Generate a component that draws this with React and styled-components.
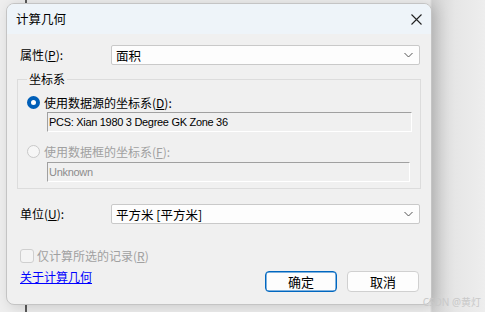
import React from "react";
import styled, { createGlobalStyle } from "styled-components";

const Global = createGlobalStyle`
  html, body { margin: 0; padding: 0; }
  body {
    width: 485px; height: 312px; overflow: hidden;
    background:
      linear-gradient(to right, transparent 25px, #5a5a5a 25px, #5a5a5a 27px, transparent 27px),
      linear-gradient(to right, #eeeeee 0, #eeeeee 430px, #d2d2d2 432px, #e6e6e6 455px, #eeeeee 485px);
    font-family: "Noto Sans CJK SC", "Noto Sans", sans-serif;
    font-size: 12px;
    color: #000;
  }
`;

const Page = styled.div`
  position: relative;
  width: 485px;
  height: 312px;
  padding: 3px 0 0 6px;
  box-sizing: border-box;
`;

const Dialog = styled.div`
  width: 426px;
  height: 302px;
  box-sizing: border-box;
  border: 1px solid #c4c4c4;
  border-radius: 8px;
  background: #f0f0f0;
  overflow: hidden;
  display: flex;
  flex-direction: column;
  box-shadow: 4px 2px 14px rgba(0, 0, 0, 0.16);
`;

const TitleBar = styled.div`
  height: 30px;
  flex: none;
  display: flex;
  align-items: center;
  justify-content: space-between;
  padding: 0 9px 0 9px;
  background: #eef4f9;
`;

const Title = styled.span`
  font-size: 12.5px;
  line-height: 1;
`;

const Close = styled.svg`
  width: 11px;
  height: 11px;
`;

const Body = styled.div`
  flex: 1;
  display: flex;
  flex-direction: column;
  padding: 11px 11px 0 13px;
`;

const FieldRow = styled.div`
  display: grid;
  grid-template-columns: 91px 1fr;
  align-items: center;
  height: 20px;
  margin-top: ${(p) => p.$top || 0}px;
`;

const Label = styled.span`
  line-height: 1;
`;

const Key = styled.span`
  text-decoration: underline;
  text-underline-offset: 1px;
`;

const Select = styled.div`
  height: 20px;
  box-sizing: border-box;
  border: 1px solid #c9c9c9;
  border-radius: 2px;
  background: #fdfdfd;
  display: flex;
  align-items: center;
  justify-content: space-between;
  padding: 0 6px 0 4px;
  font-size: 12.5px;
`;

const Chevron = styled.svg`
  width: 9px;
  height: 6px;
`;

const Group = styled.fieldset`
  margin: 7px 0 0 -3px;
  width: 404px;
  height: 117px;
  box-sizing: border-box;
  border: 1px solid #dcdcdc;
  padding: 0 0 0 9px;
  display: flex;
  flex-direction: column;
`;

const Legend = styled.legend`
  padding: 0 2px;
  margin-left: 0;
  font-size: 12px;
  line-height: 14px;
`;

const RadioRow = styled.div`
  display: flex;
  align-items: center;
  gap: 4px;
  height: 16px;
  margin-top: ${(p) => p.$top}px;
  color: ${(p) => (p.$disabled ? "#a0a0a0" : "#000")};
  font-size: 12px;
`;

const Radio = styled.span`
  width: 13px;
  height: 13px;
  box-sizing: border-box;
  border-radius: 50%;
  flex: none;
  ${(p) =>
    p.$checked
      ? `background: #fff; border: 4px solid #005fb8;`
      : `background: #f6f6f6; border: 1px solid #c8c8c8;`}
`;

const TextBox = styled.div`
  margin: ${(p) => p.$top}px 0 0 20px;
  width: ${(p) => p.$w}px;
  height: 20px;
  box-sizing: border-box;
  border-top: 1px solid #a0a0a0;
  border-left: 1px solid #a0a0a0;
  border-right: 1px solid #ffffff;
  border-bottom: 1px solid #ffffff;
  display: flex;
  align-items: center;
  padding-left: 1px;
  font-family: "Liberation Sans", "Noto Sans CJK SC", sans-serif;
  font-size: 11px;
  letter-spacing: -0.3px;
  color: ${(p) => (p.$disabled ? "#8c8c8c" : "#000")};
`;

const CheckRow = styled.label`
  display: flex;
  align-items: center;
  gap: 3px;
  margin-top: 24px;
  color: #a0a0a0;
  font-size: 12px;
  height: 15px;
`;

const Box = styled.span`
  width: 14px;
  height: 14px;
  box-sizing: border-box;
  border: 1px solid #cfcfcf;
  border-radius: 3px;
  background: #f4f4f4;
`;

const Footer = styled.div`
  display: flex;
  align-items: flex-start;
  justify-content: space-between;
  margin-top: 7px;
`;

const Link = styled.a`
  color: #0000ff;
  text-decoration: underline;
  font-size: 12px;
  line-height: 16px;
  margin-top: -1px;
`;

const Buttons = styled.div`
  display: flex;
  gap: 10px;
  margin-top: 1px;
  margin-right: 1px;
`;

const Button = styled.button`
  width: 72px;
  height: 21px;
  box-sizing: border-box;
  border-radius: 4px;
  border: 1px solid ${(p) => (p.$primary ? "#0067c0" : "#d0d0d0")};
  box-shadow: ${(p) => (p.$primary ? "inset 0 0 0 0.5px #0067c0" : "none")};
  background: #fdfdfd;
  font-family: "Noto Sans CJK SC", sans-serif;
  font-size: 13px;
  padding: 0;
  line-height: 1;
  color: #000;
`;

const Watermark = styled.span`
  position: absolute;
  right: 4px;
  bottom: 3px;
  font-size: 10px;
  color: #c9c9c9;
  font-family: "Noto Sans", "Noto Sans CJK SC", sans-serif;
`;

const ChevronIcon = () => (
  <Chevron viewBox="0 0 9 6">
    <path d="M0.5 1 L4.5 5 L8.5 1" fill="none" stroke="#555" strokeWidth="1" />
  </Chevron>
);

export default function App() {
  return (
    <Page>
      <Global />
      <Dialog>
        <TitleBar>
          <Title>计算几何</Title>
          <Close viewBox="0 0 11 11">
            <path d="M0.5 0.5 L10.5 10.5 M10.5 0.5 L0.5 10.5" stroke="#222" strokeWidth="1.1" />
          </Close>
        </TitleBar>
        <Body>
          <FieldRow $top={0}>
            <Label>
              属性(<Key>P</Key>):
            </Label>
            <Select>
              <span>面积</span>
              <ChevronIcon />
            </Select>
          </FieldRow>
          <Group>
            <Legend>坐标系</Legend>
            <RadioRow $top={8}>
              <Radio $checked />
              <span>
                使用数据源的坐标系(<Key>D</Key>):
              </span>
            </RadioRow>
            <TextBox $top={2} $w={365}>PCS: Xian 1980 3 Degree GK Zone 36</TextBox>
            <RadioRow $top={11} $disabled>
              <Radio />
              <span>
                使用数据框的坐标系(<Key>F</Key>):
              </span>
            </RadioRow>
            <TextBox $top={3} $w={363} $disabled>
              Unknown
            </TextBox>
          </Group>
          <FieldRow $top={15}>
            <Label>
              单位(<Key>U</Key>):
            </Label>
            <Select>
              <span>平方米 [平方米]</span>
              <ChevronIcon />
            </Select>
          </FieldRow>
          <CheckRow>
            <Box />
            <span>
              仅计算所选的记录(<Key>R</Key>)
            </span>
          </CheckRow>
          <Footer>
            <Link href="#">关于计算几何</Link>
            <Buttons>
              <Button $primary>确定</Button>
              <Button>取消</Button>
            </Buttons>
          </Footer>
        </Body>
      </Dialog>
      <Watermark>CSDN @黄灯</Watermark>
    </Page>
  );
}
